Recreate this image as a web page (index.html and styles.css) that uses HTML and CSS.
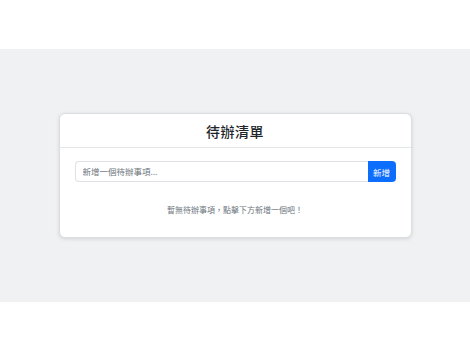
FILE: index.html
```html
<!DOCTYPE html>
<html lang="zh-Hant">
<head>
    <meta charset="UTF-8">
    <meta name="viewport" content="width=device-width, initial-scale=1.0">
    <title>待辦清單</title>
    <link rel="stylesheet" href="styles.css">
</head>
<body>
    <main class="app-wrap">
        <div class="todo-card">
            <div class="todo-header">
                <h2>待辦清單</h2>
            </div>
            <div class="todo-body">
                <div class="input-row">
                    <input type="text" id="todoInput" placeholder="新增一個待辦事項...">
                    <button id="addBtn">新增</button>
                </div>
                <p class="empty-text">暫無待辦事項，點擊下方新增一個吧！</p>
            </div>
        </div>
    </main>
</body>
</html>
```

FILE: styles.css
```css
* {
    margin: 0;
    padding: 0;
    box-sizing: border-box;
    font-family: 'Noto Sans', 'Noto Sans CJK TC', sans-serif;
}

body {
    background: #fff;
    padding-top: 49px;
}

.app-wrap {
    height: 253px;
    background: #f0f1f3;
    display: flex;
    justify-content: center;
    align-items: center;
}

.todo-card {
    width: 353px;
    background: #fff;
    border: 1px solid #dcdde0;
    border-radius: 6px;
    box-shadow: 0 1px 4px rgba(0, 0, 0, 0.12);
}

.todo-header {
    height: 34px;
    border-bottom: 1px solid #e6e7ea;
    display: flex;
    justify-content: center;
    align-items: center;
}

.todo-header h2 {
    font-size: 14px;
    font-weight: 500;
    color: #212529;
    letter-spacing: 0.5px;
}

.todo-body {
    padding: 13px 15px 0;
    height: 89px;
}

.input-row {
    display: flex;
    height: 21px;
}

.input-row input {
    flex: 1;
    min-width: 0;
    border: 1px solid #dee2e6;
    border-right: none;
    border-radius: 4px 0 0 4px;
    padding: 0 7px;
    font-size: 8.5px;
    color: #212529;
    outline: none;
}

.input-row input::placeholder {
    color: #6c757d;
}

.input-row button {
    width: 28px;
    border: none;
    border-radius: 0 4px 4px 0;
    background: #0d6efd;
    color: #fff;
    font-size: 8.5px;
    cursor: pointer;
}

.empty-text {
    margin-top: 22px;
    text-align: center;
    font-size: 8px;
    color: #6c757d;
}
```
